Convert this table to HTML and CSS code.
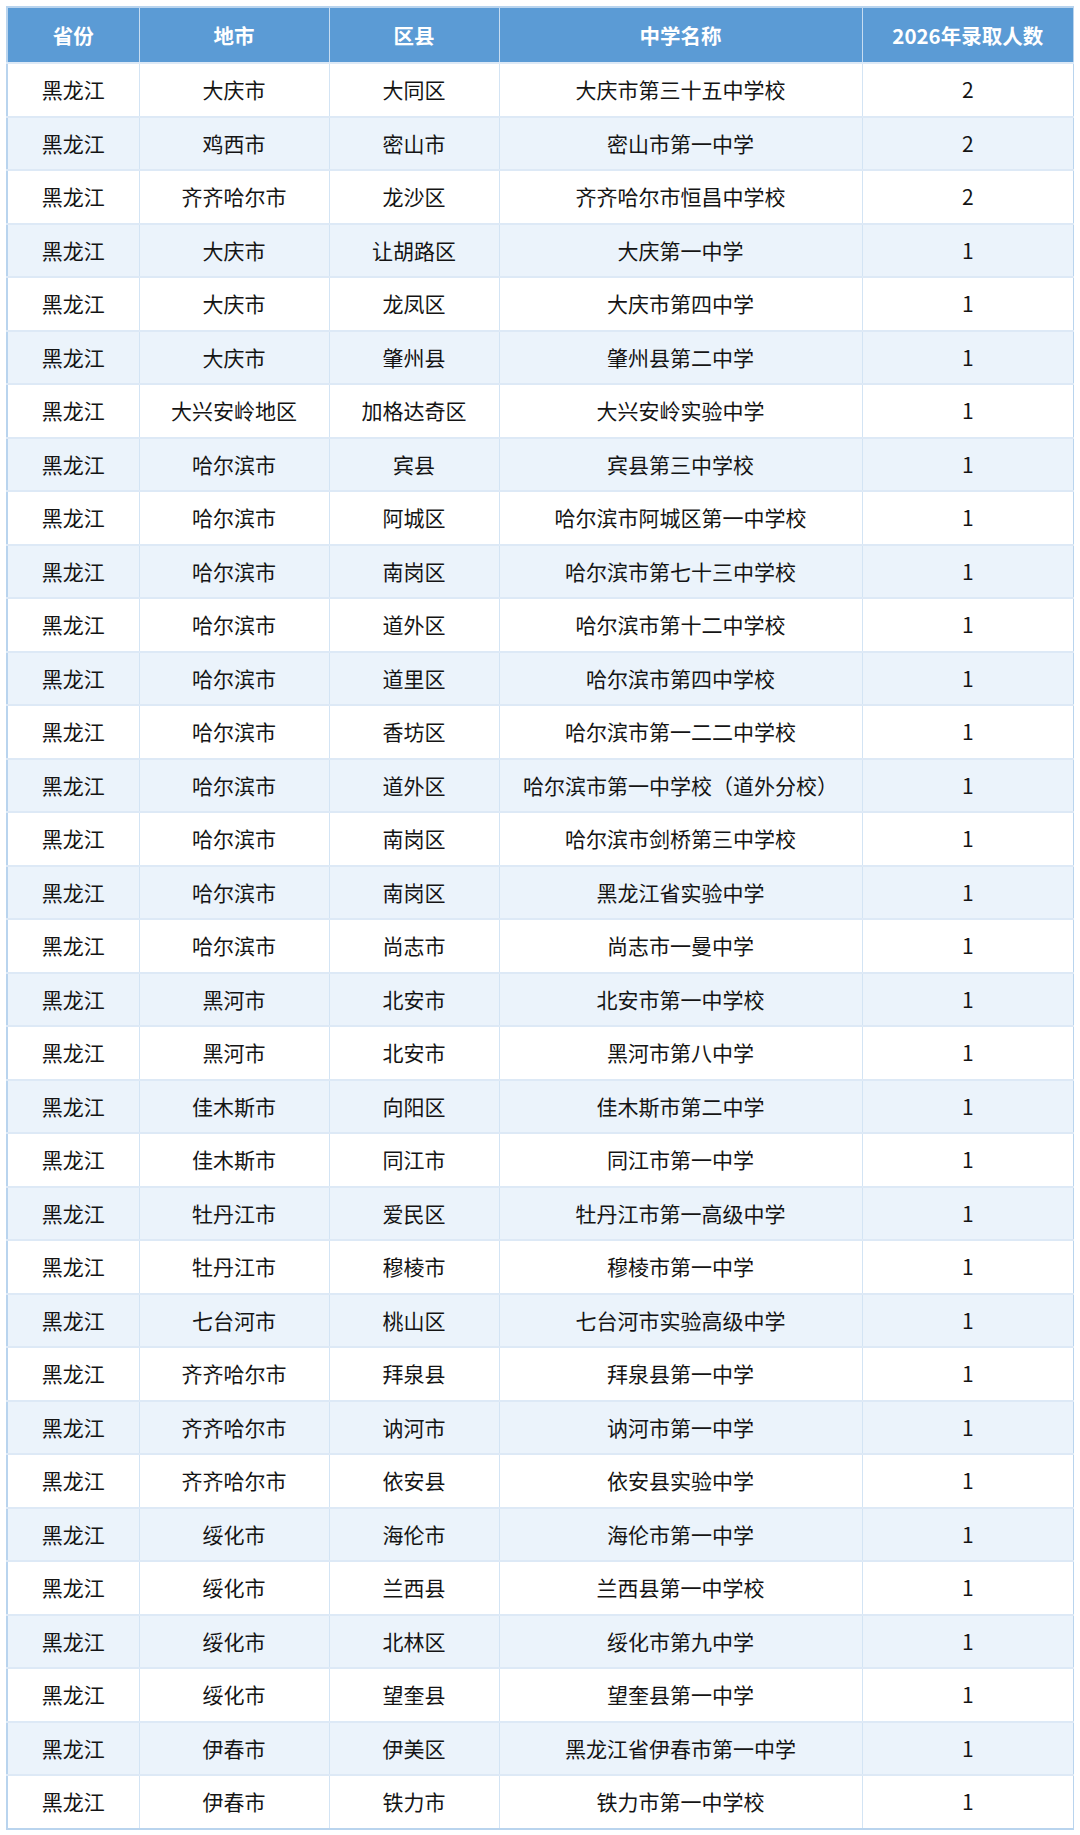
FILE: index.html
```html
<!DOCTYPE html>
<html lang="zh-CN">
<head>
<meta charset="utf-8">
<title>2026年录取人数</title>
<link rel="stylesheet" href="styles.css">
</head>
<body>
<table class="admit">
  <colgroup>
    <col class="c1"><col class="c2"><col class="c3"><col class="c4"><col class="c5">
  </colgroup>
  <thead>
    <tr><th>省份</th><th>地市</th><th>区县</th><th>中学名称</th><th>2026年录取人数</th></tr>
  </thead>
  <tbody>
    <tr><td>黑龙江</td><td>大庆市</td><td>大同区</td><td>大庆市第三十五中学校</td><td>2</td></tr>
    <tr><td>黑龙江</td><td>鸡西市</td><td>密山市</td><td>密山市第一中学</td><td>2</td></tr>
    <tr><td>黑龙江</td><td>齐齐哈尔市</td><td>龙沙区</td><td>齐齐哈尔市恒昌中学校</td><td>2</td></tr>
    <tr><td>黑龙江</td><td>大庆市</td><td>让胡路区</td><td>大庆第一中学</td><td>1</td></tr>
    <tr><td>黑龙江</td><td>大庆市</td><td>龙凤区</td><td>大庆市第四中学</td><td>1</td></tr>
    <tr><td>黑龙江</td><td>大庆市</td><td>肇州县</td><td>肇州县第二中学</td><td>1</td></tr>
    <tr><td>黑龙江</td><td>大兴安岭地区</td><td>加格达奇区</td><td>大兴安岭实验中学</td><td>1</td></tr>
    <tr><td>黑龙江</td><td>哈尔滨市</td><td>宾县</td><td>宾县第三中学校</td><td>1</td></tr>
    <tr><td>黑龙江</td><td>哈尔滨市</td><td>阿城区</td><td>哈尔滨市阿城区第一中学校</td><td>1</td></tr>
    <tr><td>黑龙江</td><td>哈尔滨市</td><td>南岗区</td><td>哈尔滨市第七十三中学校</td><td>1</td></tr>
    <tr><td>黑龙江</td><td>哈尔滨市</td><td>道外区</td><td>哈尔滨市第十二中学校</td><td>1</td></tr>
    <tr><td>黑龙江</td><td>哈尔滨市</td><td>道里区</td><td>哈尔滨市第四中学校</td><td>1</td></tr>
    <tr><td>黑龙江</td><td>哈尔滨市</td><td>香坊区</td><td>哈尔滨市第一二二中学校</td><td>1</td></tr>
    <tr><td>黑龙江</td><td>哈尔滨市</td><td>道外区</td><td>哈尔滨市第一中学校（道外分校）</td><td>1</td></tr>
    <tr><td>黑龙江</td><td>哈尔滨市</td><td>南岗区</td><td>哈尔滨市剑桥第三中学校</td><td>1</td></tr>
    <tr><td>黑龙江</td><td>哈尔滨市</td><td>南岗区</td><td>黑龙江省实验中学</td><td>1</td></tr>
    <tr><td>黑龙江</td><td>哈尔滨市</td><td>尚志市</td><td>尚志市一曼中学</td><td>1</td></tr>
    <tr><td>黑龙江</td><td>黑河市</td><td>北安市</td><td>北安市第一中学校</td><td>1</td></tr>
    <tr><td>黑龙江</td><td>黑河市</td><td>北安市</td><td>黑河市第八中学</td><td>1</td></tr>
    <tr><td>黑龙江</td><td>佳木斯市</td><td>向阳区</td><td>佳木斯市第二中学</td><td>1</td></tr>
    <tr><td>黑龙江</td><td>佳木斯市</td><td>同江市</td><td>同江市第一中学</td><td>1</td></tr>
    <tr><td>黑龙江</td><td>牡丹江市</td><td>爱民区</td><td>牡丹江市第一高级中学</td><td>1</td></tr>
    <tr><td>黑龙江</td><td>牡丹江市</td><td>穆棱市</td><td>穆棱市第一中学</td><td>1</td></tr>
    <tr><td>黑龙江</td><td>七台河市</td><td>桃山区</td><td>七台河市实验高级中学</td><td>1</td></tr>
    <tr><td>黑龙江</td><td>齐齐哈尔市</td><td>拜泉县</td><td>拜泉县第一中学</td><td>1</td></tr>
    <tr><td>黑龙江</td><td>齐齐哈尔市</td><td>讷河市</td><td>讷河市第一中学</td><td>1</td></tr>
    <tr><td>黑龙江</td><td>齐齐哈尔市</td><td>依安县</td><td>依安县实验中学</td><td>1</td></tr>
    <tr><td>黑龙江</td><td>绥化市</td><td>海伦市</td><td>海伦市第一中学</td><td>1</td></tr>
    <tr><td>黑龙江</td><td>绥化市</td><td>兰西县</td><td>兰西县第一中学校</td><td>1</td></tr>
    <tr><td>黑龙江</td><td>绥化市</td><td>北林区</td><td>绥化市第九中学</td><td>1</td></tr>
    <tr><td>黑龙江</td><td>绥化市</td><td>望奎县</td><td>望奎县第一中学</td><td>1</td></tr>
    <tr><td>黑龙江</td><td>伊春市</td><td>伊美区</td><td>黑龙江省伊春市第一中学</td><td>1</td></tr>
    <tr><td>黑龙江</td><td>伊春市</td><td>铁力市</td><td>铁力市第一中学校</td><td>1</td></tr>
  </tbody>
</table>
</body>
</html>
```

FILE: styles.css
```css
html, body {
  background: #ffffff;
}
body {
  margin: 6px;
  font-family: "Noto Sans CJK SC", "Noto Sans", sans-serif;
  color: #141414;
}
.admit {
  width: 1067px;
  table-layout: fixed;
  border-collapse: collapse;
  border: 2px solid #b9d4ee;
  text-align: center;
}
.c1 { width: 132px; }
.c2 { width: 190px; }
.c3 { width: 170px; }
.c4 { width: 363px; }
.c5 { width: 212px; }
.admit th {
  background: #5b9bd5;
  color: #ffffff;
  font-size: 20.5px;
  font-weight: 700;
  height: 54px;
  padding: 0;
  border-left: 1px solid #c6dcf1;
  border-right: 1px solid #c6dcf1;
  border-top: 1px solid #c6dcf1;
  line-height: 1;
}
.admit td {
  font-size: 21px;
  height: 51.5px;
  padding: 0;
  border: 1px solid #d3e4f4;
  border-top: 2px solid #dde9f6;
  line-height: 1;
}
.admit tbody tr:nth-child(even) td {
  background: #ebf3fb;
}
```
